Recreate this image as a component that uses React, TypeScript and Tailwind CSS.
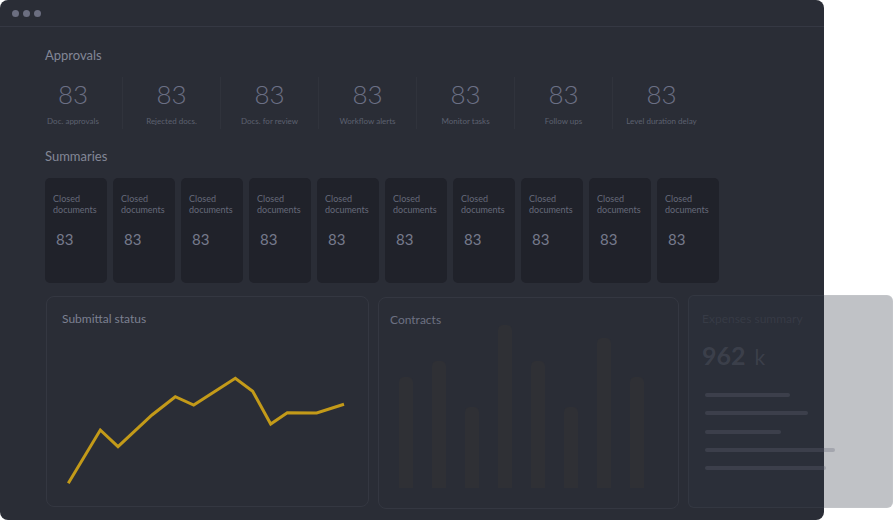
import React from "react";

const stats = [
  "Doc. approvals",
  "Rejected docs.",
  "Docs. for review",
  "Workflow alerts",
  "Monitor tasks",
  "Follow ups",
  "Level duration delay",
];

const bars = [111, 127, 81, 163, 127, 81, 150, 111];
const lines = [85, 103, 76, 130, 121];

const pts =
  "21.3,156.3 53.3,103 71,119.7 105,88 128.3,69.7 146.7,78 188.3,51.3 205.7,64.3 223.7,97 240.3,85.7 269.7,86 297,77.3";

export default function App() {
  return (
    <div
      className="w-[894px] h-[522px] bg-white overflow-hidden"
      style={{ fontFamily: "Lato, 'Noto Sans', sans-serif" }}
    >
      <div className="w-[824px] h-[520px] rounded-[8px] bg-[#2a2d36] flex flex-col">
        <div className="h-[27px] shrink-0 border-b border-[#353843] flex items-center gap-[4px] pl-[12px]">
          <div className="w-[7px] h-[7px] rounded-full bg-[#6b6e80]" />
          <div className="w-[7px] h-[7px] rounded-full bg-[#6b6e80]" />
          <div className="w-[7px] h-[7px] rounded-full bg-[#6b6e80]" />
        </div>
        <div className="pl-[24px] flex flex-col">
          <div className="pl-[21px] pt-[19px] text-[13px] leading-[18px] text-[#838797]">
            Approvals
          </div>
          <div className="flex mt-[13px]">
            {stats.map((s, i) => (
              <div
                key={s}
                className={
                  "w-[98px] flex flex-col items-center pt-[2px] pb-[3px] " +
                  (i > 0 ? "border-l border-[#30333c]" : "")
                }
              >
                <div className="text-[26px] leading-[30px] font-light text-[#6c7085]">83</div>
                <div className="mt-[7px] text-[8px] leading-[10px] text-[#5d6170] whitespace-nowrap">
                  {s}
                </div>
              </div>
            ))}
          </div>
          <div className="pl-[21px] mt-[18px] text-[13px] leading-[18px] text-[#838797]">
            Summaries
          </div>
          <div className="pl-[21px] mt-[13px] flex gap-[6px]">
            {Array.from({ length: 10 }).map((_, i) => (
              <div
                key={i}
                className="w-[62px] h-[105px] shrink-0 rounded-[5px] bg-[#20222a] pl-[8px] pt-[15px] flex flex-col"
              >
                <div className="text-[9px] leading-[11px] text-[#656979]">
                  Closed
                  <br />
                  documents
                </div>
                <div className="mt-[15px] pl-[3px] text-[15px] leading-[18px] text-[#767a8c]">83</div>
              </div>
            ))}
          </div>
          <div className="pl-[21px] mt-[12px] flex items-start gap-[9px]">
            <div className="ml-[1px] mt-[1px] w-[323px] h-[211px] shrink-0 rounded-[8px] border border-[#343741] flex flex-col">
              <div className="px-[15px] pt-[14px] text-[12px] leading-[16px] text-[#7c8091]">
                Submittal status
              </div>
              <svg width="321" height="179" className="block overflow-visible">
                <polyline
                  points={pts}
                  fill="none"
                  stroke="#c39a19"
                  strokeWidth="3"
                  strokeLinejoin="miter"
                />
              </svg>
            </div>
            <div className="mt-[2px] w-[301px] h-[212px] shrink-0 rounded-[8px] border border-[#343741] flex flex-col">
              <div className="px-[11px] pt-[14px] text-[12px] leading-[16px] text-[#6d7182]">
                Contracts
              </div>
              <div className="mt-[-4px] h-[164px] pl-[20px] flex items-end gap-[19px]">
                {bars.map((h, i) => (
                  <div
                    key={i}
                    className="w-[14px] shrink-0 rounded-t-[5px] bg-[#2f3035]"
                    style={{ height: h }}
                  />
                ))}
              </div>
            </div>
            <div className="w-[205px] h-[213px] shrink-0 rounded-[6px] bg-[rgba(48,52,66,0.3)] border border-[rgba(255,255,255,0.04)] pl-[13px] pt-[15px] flex flex-col">
              <div className="text-[12px] leading-[16px] text-[rgba(100,104,120,0.22)] whitespace-nowrap">
                Expenses summary
              </div>
              <div className="mt-[14px] h-[28px] flex items-baseline gap-[9px] text-[rgba(100,104,120,0.3)]">
                <span className="text-[25px] leading-[28px] font-bold">962</span>
                <span className="text-[21px] leading-[28px]">k</span>
              </div>
              <div className="mt-[24px] pl-[3px] flex flex-col gap-[14.3px]">
                {lines.map((w, i) => (
                  <div
                    key={i}
                    className="h-[4px] rounded-full bg-[rgba(100,104,120,0.3)]"
                    style={{ width: w }}
                  />
                ))}
              </div>
            </div>
          </div>
        </div>
      </div>
    </div>
  );
}
